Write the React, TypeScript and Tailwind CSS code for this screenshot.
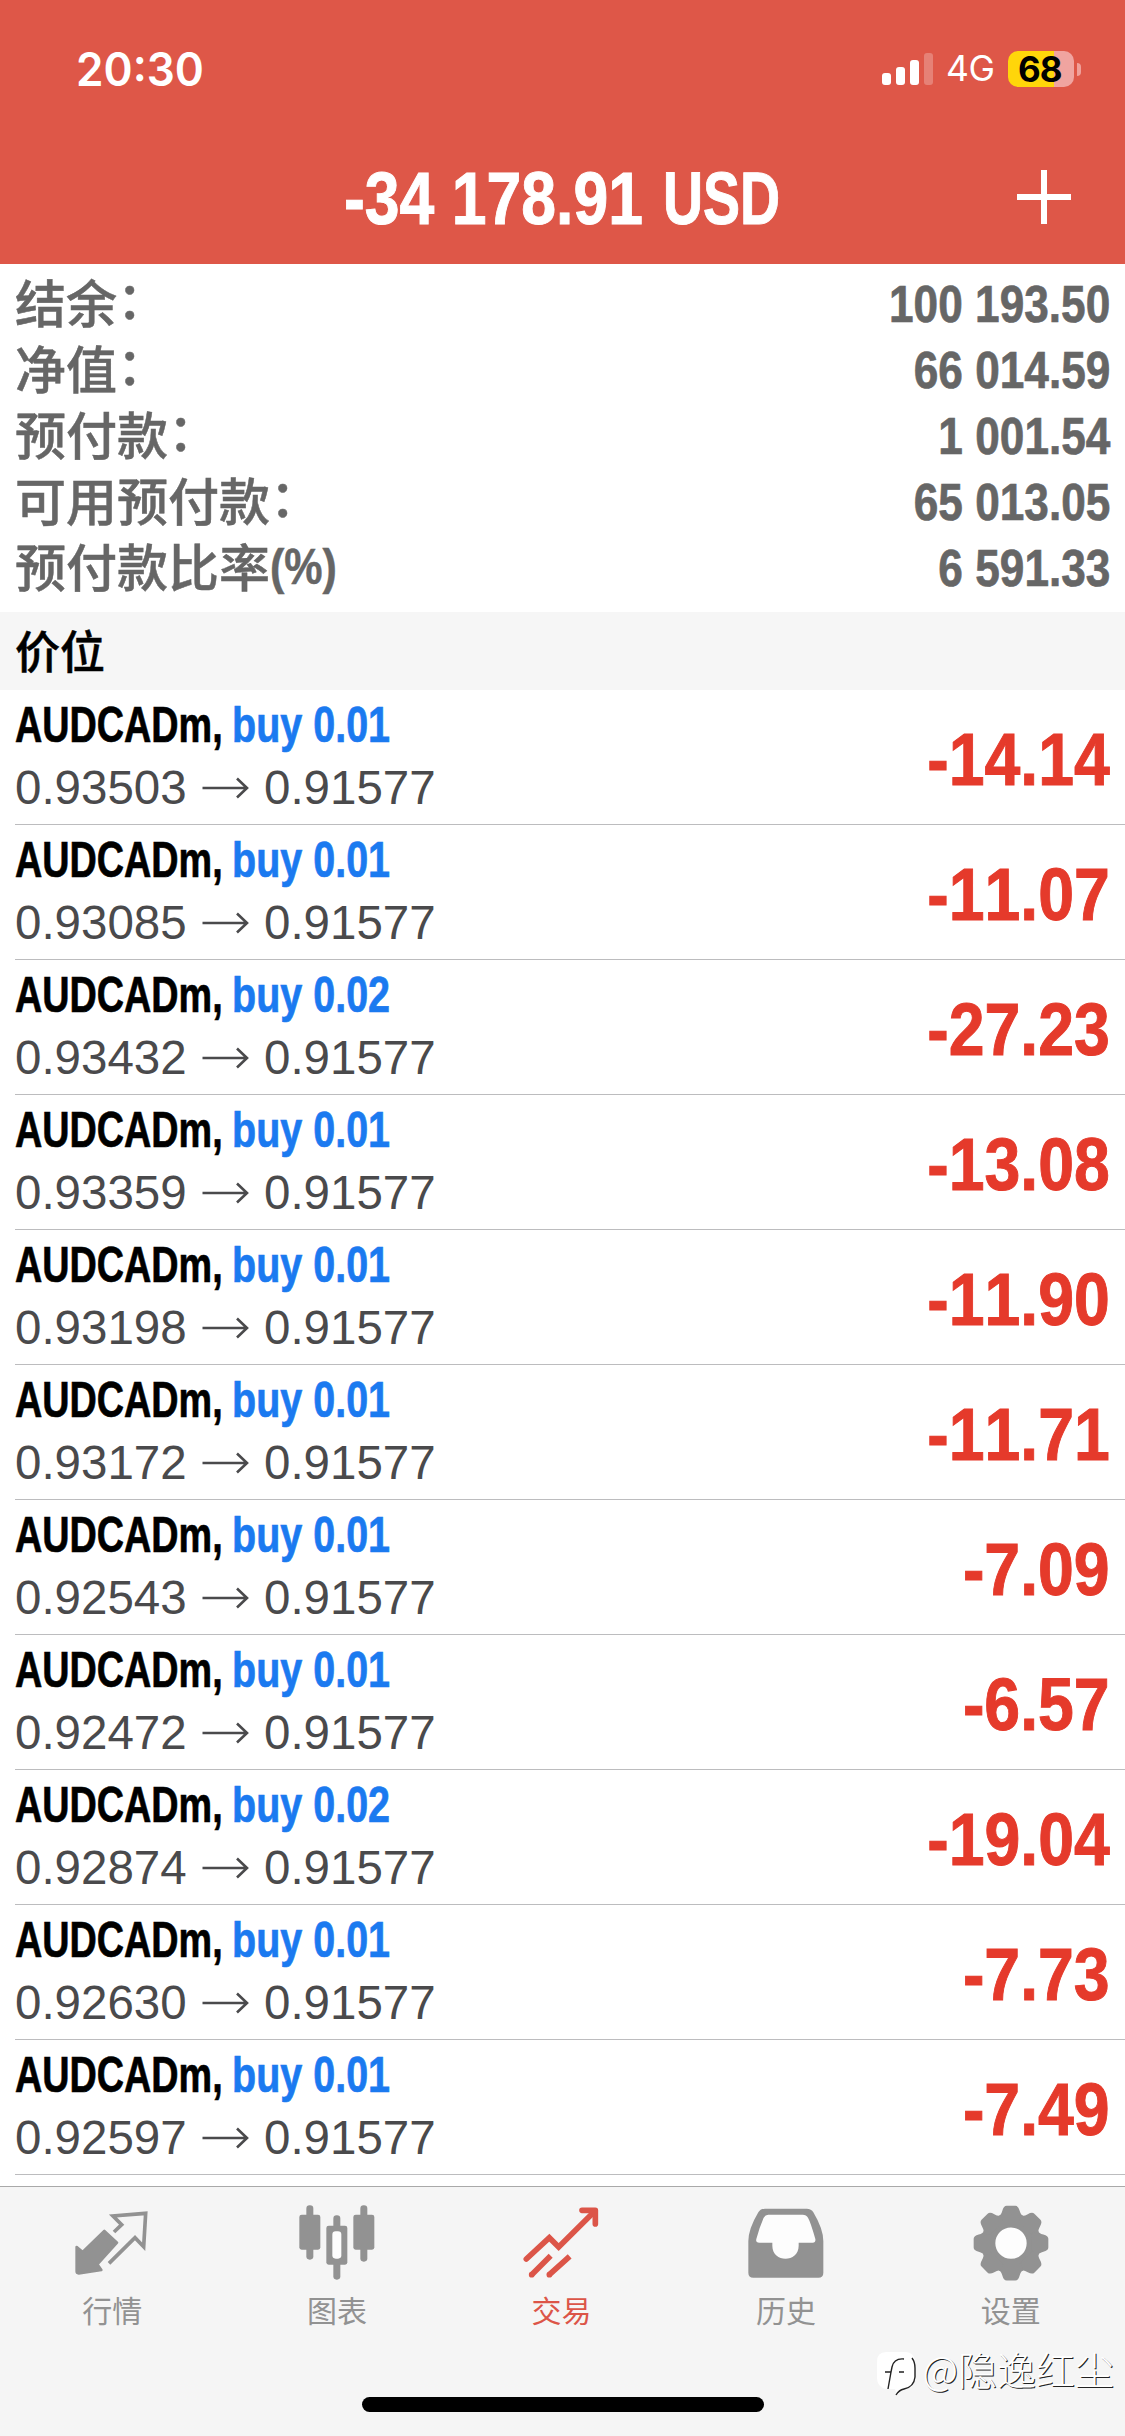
import React from "react";

const summary = [
  { label: "结余", suffix: ":", value: "100 193.50" },
  { label: "净值", suffix: ":", value: "66 014.59" },
  { label: "预付款", suffix: ":", value: "1 001.54" },
  { label: "可用预付款", suffix: ":", value: "65 013.05" },
  { label: "预付款比率", suffix: "(%)", value: "6 591.33" },
];

const positions = [
  ["0.01", "0.93503", "-14.14"],
  ["0.01", "0.93085", "-11.07"],
  ["0.02", "0.93432", "-27.23"],
  ["0.01", "0.93359", "-13.08"],
  ["0.01", "0.93198", "-11.90"],
  ["0.01", "0.93172", "-11.71"],
  ["0.01", "0.92543", "-7.09"],
  ["0.01", "0.92472", "-6.57"],
  ["0.02", "0.92874", "-19.04"],
  ["0.01", "0.92630", "-7.73"],
  ["0.01", "0.92597", "-7.49"],
];

function StatusBar() {
  return (
    <div className="flex h-[138px] items-center justify-between pr-[44px] pl-[76px]">
      <span className="origin-left scale-x-[0.96] font-['Inter'] text-[46px] leading-[60px] font-semibold">20:30</span>
      <div className="flex items-center">
        <svg width="52" height="32" viewBox="0 0 52 32" fill="#fff">
          <rect x="0" y="20" width="9" height="12" rx="3" />
          <rect x="14" y="14" width="9" height="18" rx="3" />
          <rect x="28" y="7" width="9" height="25" rx="3" />
          <rect x="42" y="0" width="9" height="32" rx="3" opacity=".25" />
        </svg>
        <span className="ml-[12px] w-[49px] font-['Inter'] text-[35.500px] leading-[40px] tracking-[-0.5px] whitespace-nowrap">4G</span>
        <div className="ml-[13px] flex h-[36px] w-[66px] items-center rounded-[10px] bg-[linear-gradient(90deg,#ffd60a_0_46px,#f0a4a0_46px)] pl-[10px]">
          <span className="font-['Inter'] text-[35px] leading-[36px] font-bold tracking-[-1px] text-black">68</span>
        </div>
        <div className="ml-[3px] h-[13px] w-[4px] rounded-r-full bg-[#f0a09a]" />
      </div>
    </div>
  );
}

function QuotesIcon() {
  return (
    <svg className="size-[80px]" viewBox="215 130 240 240">
      <path d="M229 262L247 277L312 214L350 249L291 314L303 331L235 341Q229 341 229 335Z" fill="#929292" stroke="#929292" strokeWidth="8" strokeLinejoin="round" />
      <path d="M341 217L364 195L338 169L436 161L430 261L404 234L326 311" fill="none" stroke="#929292" strokeWidth="11" />
    </svg>
  );
}

function ChartIcon() {
  return (
    <svg className="size-[80px]" viewBox="890 130 240 240" fill="#929292">
      <rect x="918" y="137" width="21" height="163" rx="10" />
      <rect x="897" y="165" width="63" height="105" rx="7" />
      <rect x="1080" y="137" width="21" height="169" rx="10" />
      <rect x="1059" y="165" width="63" height="105" rx="7" />
      <rect x="999" y="167" width="21" height="50" rx="10" />
      <rect x="999" y="290" width="21" height="70" rx="10" />
      <rect x="978" y="198" width="63" height="117" rx="7" />
      <rect x="996" y="215" width="27" height="82" rx="10" fill="#fdfdfd" />
    </svg>
  );
}

function TradeIcon() {
  return (
    <svg className="size-[80px]" viewBox="215 130 240 240" fill="none" stroke="#dc5548" strokeWidth="17">
      <path d="M231 298L300 234L328 262L436 155" strokeLinecap="round" />
      <path d="M398 152H438V193" strokeLinecap="round" strokeLinejoin="round" />
      <path d="M304 288L247 345M361 290L300 345" />
      <circle cx="247" cy="345" r="8.500" fill="#dc5548" stroke="none" />
      <circle cx="300" cy="345" r="8.500" fill="#dc5548" stroke="none" />
    </svg>
  );
}

function HistoryIcon() {
  return (
    <svg className="size-[80px]" viewBox="890 130 240 240">
      <path d="M947 147H1072Q1086 147 1092 158Q1122 208 1122 245V339Q1122 354 1107 354H912Q897 354 897 339V245Q897 208 927 158Q933 147 947 147Z" fill="#929292" />
      <path d="M957 165H1060Q1071 165 1076 174Q1084 188 1098 238Q1100 249 1090 249H1048V258C1048 310 969 310 969 258V249H930Q918 249 921 238Q931 201 943 174Q948 165 957 165Z" fill="#fdfdfd" />
    </svg>
  );
}

function SettingsIcon() {
  return (
    <svg className="size-[80px]" viewBox="-120 -120.500 240 240" fill="#929292">
      <circle r="67" fill="#fdfdfd" stroke="#929292" strokeWidth="40" />
      {[0, 45, 90, 135, 180, 225, 270, 315].map((a) => (
        <path key={a} transform={`rotate(${a})`} d="M-30 -62L-36 -82Q-30 -83 -26 -97Q-22 -112 -13 -112H13Q22 -112 26 -97Q30 -83 36 -82L30 -62Z" />
      ))}
    </svg>
  );
}

const tabs = [
  { label: "行情", Icon: QuotesIcon },
  { label: "图表", Icon: ChartIcon },
  { label: "交易", Icon: TradeIcon, active: true },
  { label: "历史", Icon: HistoryIcon },
  { label: "设置", Icon: SettingsIcon },
];

function PriceArrow() {
  return (
    <svg className="mr-[15px] h-[24px] w-[47px]" viewBox="0 0 47 24" fill="none" stroke="#4a4a4c" strokeWidth="2.600">
      <path d="M0.500 12H45M35 2.500L45 12L35 21.500" />
    </svg>
  );
}

export default function App() {
  return (
    <div className="relative flex h-[2436px] w-[1125px] flex-col overflow-hidden bg-white font-['Liberation_Sans','Noto_Sans_CJK_SC',sans-serif] [font-kerning:none]">
      <header className="h-[264px] bg-[#de5748] text-white">
        <StatusBar />
        <div className="grid h-[118px] grid-cols-[1fr_auto_1fr] items-center">
          <span />
          <h1 className="flex w-[438px] translate-y-[2px] text-[74px] leading-[76px] font-bold whitespace-nowrap [-webkit-text-stroke:1px]">
            <span className="w-[319px] shrink-0">
              <span className="inline-block origin-left scale-x-[0.845]">-34 178.91</span>
            </span>
            <span className="w-[119px] shrink-0">
              <span className="inline-block origin-left scale-x-[0.75]">USD</span>
            </span>
          </h1>
          <svg className="mr-[53px] size-[56px] justify-self-end" viewBox="0 0 56 56" stroke="#fff" strokeWidth="6">
            <path d="M1 28H55M28 1V55" />
          </svg>
        </div>
      </header>

      <section className="flex h-[348px] flex-col px-[15px] pt-[5px] text-[#666]">
        {summary.map(({ label, suffix, value }) => (
          <div key={label} className="flex h-[66px] items-center justify-between">
            <div className="flex -translate-y-px items-center font-['Noto_Sans_CJK_SC',sans-serif] text-[51px] leading-[66px] font-medium whitespace-nowrap [-webkit-text-stroke:0.5px]">
              {label}
              {suffix === ":" ? (
                <span className="-translate-y-[4px]">：</span>
              ) : (
                <span className="origin-left translate-y-[2px] scale-x-[0.86] font-['Liberation_Sans'] text-[50px] font-bold">{suffix}</span>
              )}
            </div>
            <span className="origin-right translate-y-[2px] scale-x-[0.85] text-[52px] leading-[66px] font-bold [-webkit-text-stroke:0.7px]">{value}</span>
          </div>
        ))}
      </section>

      <div className="flex h-[78px] items-center bg-[#f6f6f6] pb-[3px] pl-[15px] font-['Noto_Sans_CJK_SC',sans-serif] text-[45px] leading-[60px] font-medium text-black [-webkit-text-stroke:0.5px]">
        价位
      </div>

      <main className="h-[1496px]">
        {positions.map(([lots, open, profit]) => (
          <div key={open} className="ml-[15px] flex h-[135px] items-center justify-between border-b border-[#bcbcbe] pr-[15px]">
            <div className="flex flex-col">
              <div className="flex -translate-y-px text-[50px] leading-[62px] font-bold whitespace-nowrap text-black [-webkit-text-stroke:0.7px]">
                <span className="w-[217px] shrink-0">
                  <span className="inline-block origin-left scale-x-[0.755]">AUDCADm,</span>
                </span>
                <span className="origin-left scale-x-[0.79] text-[#1b7af0]">buy {lots}</span>
              </div>
              <div className="flex items-center text-[47.500px] leading-[62px] text-[#4a4a4c]">
                <span className="w-[187px]">{open}</span>
                <PriceArrow />
                0.91577
              </div>
            </div>
            <span className="origin-right translate-y-[3px] scale-x-[0.87] text-[74px] leading-[80px] font-bold text-[#e53a2b] [-webkit-text-stroke:1px]">{profit}</span>
          </div>
        ))}
      </main>

      <nav className="flex h-[250px] flex-col items-center border-t border-[#a9a9a9] bg-[#f5f5f5]">
        <div className="flex w-full pt-[16px] pr-[2px]">
          {tabs.map(({ label, Icon, active }) => (
            <div key={label} className={active ? "flex flex-1 flex-col items-center text-[#dc5548]" : "flex flex-1 flex-col items-center text-[#929292]"}>
              <Icon />
              <span className="mt-[6px] font-['Noto_Sans_CJK_SC',sans-serif] text-[30px] leading-[40px]">{label}</span>
            </div>
          ))}
        </div>
        <div className="mt-[68px] h-[15px] w-[402px] rounded-full bg-black" />
      </nav>

      <div className="absolute right-[11px] bottom-[36px] flex items-start text-white">
        <svg className="mr-[3px]" width="44" height="48" viewBox="0 0 44 48" fill="none">
          <path d="M10 0H29Q39 0 39 12V26Q39 36 28 37L21 43L19 37H10Q1 35 1 26V10Q1 0 10 0Z" fill="#fff" />
          <path d="M36 6Q39 10 39 16V25Q38 35 28 37Q23 38 20 43" stroke="#222" strokeWidth="1.400" />
          <path d="M9 20H15L12 37M15 20L16 15Q18 6 28 7M23 20H28" stroke="#222" strokeWidth="1.400" />
        </svg>
        <span className="-mt-[8px] font-['Noto_Sans_CJK_SC',sans-serif] text-[39px] leading-[48px] font-light [text-shadow:1px_1px_0_#222]">@隐逸红尘</span>
      </div>
    </div>
  );
}
